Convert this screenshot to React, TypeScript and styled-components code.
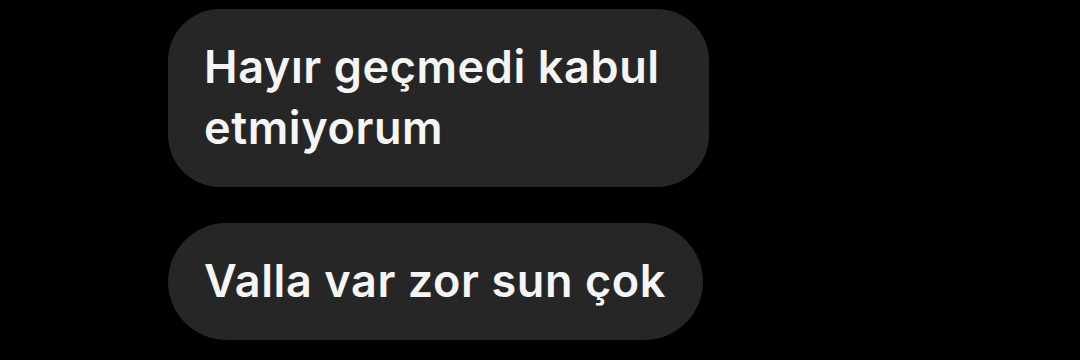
import styled, { createGlobalStyle } from 'styled-components';

const GlobalStyle = createGlobalStyle`
  html, body {
    margin: 0;
    padding: 0;
    background: #000;
  }
`;

const Thread = styled.div`
  width: 1080px;
  height: 360px;
  box-sizing: border-box;
  padding: 9px 0 0 168px;
  display: flex;
  flex-direction: column;
  align-items: flex-start;
  gap: 36px;
  background: #000;
  overflow: hidden;
`;

const Bubble = styled.div<{ $pill?: boolean }>`
  box-sizing: border-box;
  max-width: 541px;
  padding: 27px 37px 29px 36px;
  border-radius: ${({ $pill }) => ($pill ? '59px' : '52px')};
  background: #262626;
  color: #f5f5f5;
  font-family: Inter, 'Noto Sans', sans-serif;
  font-size: 45px;
  font-weight: 600;
  letter-spacing: 0.6px;
  line-height: 61px;
`;

export default function App() {
  return (
    <>
      <GlobalStyle />
      <Thread>
        <Bubble>Hayır geçmedi kabul etmiyorum</Bubble>
        <Bubble $pill>Valla var zor sun çok</Bubble>
      </Thread>
    </>
  );
}
